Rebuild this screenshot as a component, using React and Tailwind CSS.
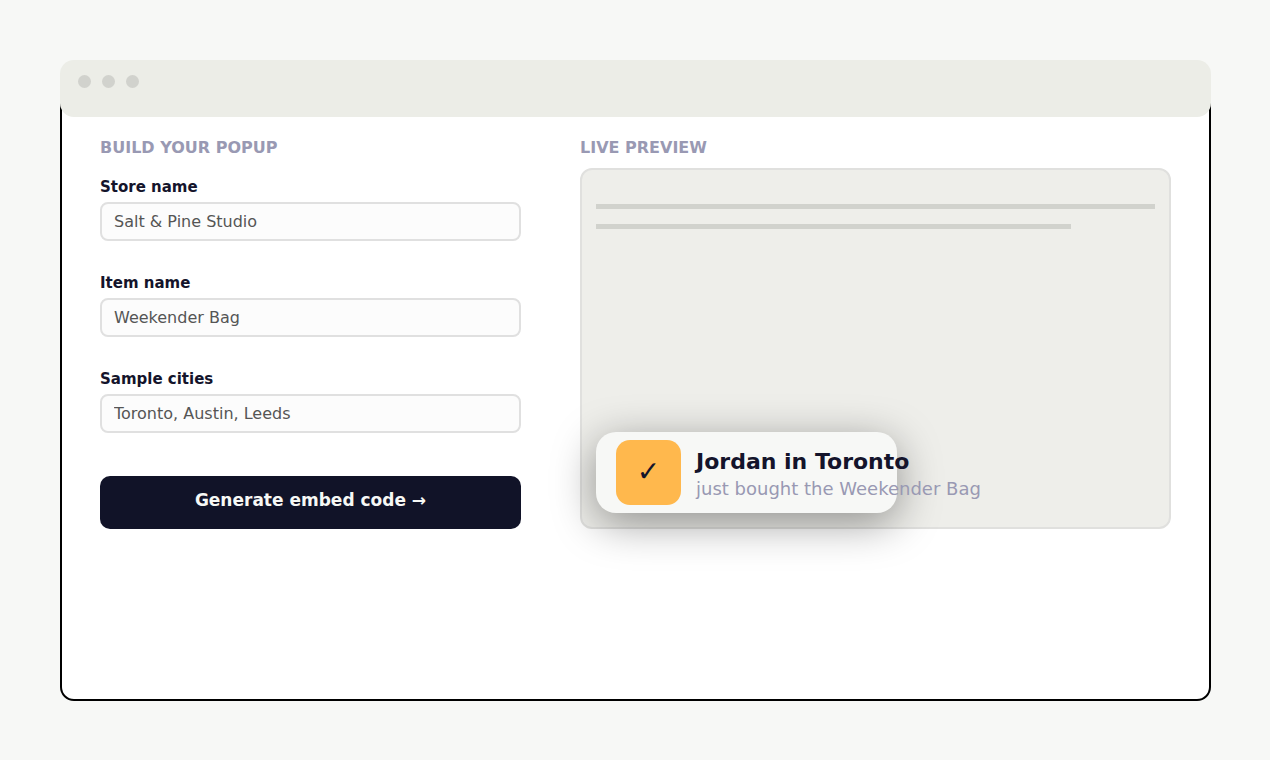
import React from "react";

const FIELDS = [
  { id: "store", label: "Store name", value: "Salt & Pine Studio" },
  { id: "item", label: "Item name", value: "Weekender Bag" },
  { id: "cities", label: "Sample cities", value: "Toronto, Austin, Leeds" },
];

function TitleBar() {
  return (
    <header className="-mx-0.5 -mt-0.5 flex h-[57px] gap-[11px] rounded-[14px] bg-[#ecede7] px-[18px] pt-[15px]">
      <span className="size-[13px] rounded-full bg-[#d1d2cd]" />
      <span className="size-[13px] rounded-full bg-[#d1d2cd]" />
      <span className="size-[13px] rounded-full bg-[#d1d2cd]" />
    </header>
  );
}

function Field({ id, label, value }) {
  return (
    <div className="flex flex-col gap-[5px]">
      <label htmlFor={id} className="text-[15px] leading-5 font-bold text-[#14142b]">
        {label}
      </label>
      <input
        id={id}
        type="text"
        defaultValue={value}
        className="h-[39px] w-full rounded-lg border-2 border-[#e0e0e0] bg-[#fcfcfc] px-3 text-base text-[#555555]"
      />
    </div>
  );
}

function Builder() {
  return (
    <section className="flex min-w-0 flex-col">
      <h2 className="text-base leading-[22px] font-bold text-[#9999b3]">BUILD YOUR POPUP</h2>
      <form className="mt-[18px] flex flex-col" onSubmit={(e) => e.preventDefault()}>
        <div className="flex flex-col gap-8">
          {FIELDS.map((f) => (
            <Field key={f.id} {...f} />
          ))}
        </div>
        <button
          type="submit"
          className="mt-[43px] h-[53px] rounded-[10px] bg-[#111328] pb-1 text-[17px] font-bold text-[#f7f8f5]"
        >
          Generate embed code →
        </button>
      </form>
    </section>
  );
}

function Preview() {
  return (
    <section className="flex min-w-0 flex-col">
      <h2 className="text-base leading-[22px] font-bold text-[#9999b3]">LIVE PREVIEW</h2>
      <div className="mt-[9px] flex flex-1 flex-col rounded-[12px] border-2 border-[#e0e0de] bg-[#eeeeea] px-3.5 pt-[34px] pb-3.5">
        <div className="h-[5px] bg-[#d1d2cd]" />
        <div className="mt-[15px] h-[5px] w-[85%] bg-[#d1d2cd]" />
        <div className="mt-auto flex h-[81px] w-[301px] items-center gap-[15px] rounded-[20px] bg-[#f7f8f6] pl-5 shadow-[0_10px_44px_rgba(0,0,0,0.4)]">
          <div className="flex size-[65px] shrink-0 items-center justify-center rounded-[14px] bg-[#ffb84d] pb-0.5 text-[28px] leading-none text-[#14142b]">
            ✓
          </div>
          <div className="pt-1 whitespace-nowrap">
            <p className="text-[22px] leading-7 font-bold text-[#14142b]">Jordan in Toronto</p>
            <p className="text-[18px] leading-[26px] text-[#9999b3]">just bought the Weekender Bag</p>
          </div>
        </div>
      </div>
    </section>
  );
}

export default function App() {
  return (
    <div className="flex min-h-screen flex-col bg-[#f7f8f6] pt-[60px] pr-[59px] pb-[59px] pl-[60px] font-['DejaVu_Sans',sans-serif]">
      <main className="flex flex-1 flex-col rounded-t-[20px] rounded-b-[14px] border-2 border-black bg-white">
        <TitleBar />
        <div className="grid grid-cols-[421fr_591fr] gap-[59px] px-[38px] pt-5 pb-10">
          <Builder />
          <Preview />
        </div>
      </main>
    </div>
  );
}
